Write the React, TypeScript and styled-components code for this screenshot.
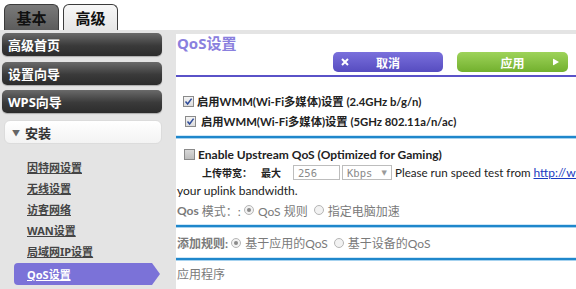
import styled, { createGlobalStyle, css } from "styled-components"

const GlobalStyle = createGlobalStyle`
  html, body {
    margin: 0;
    padding: 0;
    background: #ffffff;
  }
  body {
    width: 576px;
    height: 289px;
    overflow: hidden;
    font-family: "Noto Sans", "Noto Sans CJK SC", sans-serif;
  }
`

const Page = styled.div`
  width: 576px;
  height: 289px;
  display: flex;
  flex-direction: column;
  overflow: hidden;
`

const TabBar = styled.div`
  height: 30px;
  display: flex;
  align-items: flex-end;
  gap: 4px;
  padding-left: 4px;
  box-sizing: border-box;
`

const Tab = styled.div<{ $active?: boolean }>`
  width: 55px;
  height: 26px;
  box-sizing: border-box;
  border: 1px solid #3c3c3c;
  border-bottom: none;
  border-radius: 6px 6px 0 0;
  display: flex;
  align-items: center;
  justify-content: center;
  font-family: "Noto Sans CJK SC", sans-serif;
  font-size: 15px;
  font-weight: 700;
  color: #111;
  background: ${({ $active }) =>
    $active ? "linear-gradient(#f7f7f7, #e6e6e6)" : "linear-gradient(#7a7a7a, #5c5c5c)"};
`

const Body = styled.div`
  flex: 1;
  display: flex;
  background: #e4e4e4;
`

const Sidebar = styled.nav`
  width: 176px;
  flex: none;
  padding: 3px 0 0 2px;
  box-sizing: border-box;
  display: flex;
  flex-direction: column;
`

const MenuButton = styled.div<{ $gap: number }>`
  width: 160px;
  height: 23px;
  margin-bottom: ${({ $gap }) => $gap}px;
  border-radius: 5px;
  background: linear-gradient(#6a6a6a, #3a3a3a 55%, #2c2c2c);
  box-shadow: 0 1px 1px rgba(0, 0, 0, 0.25);
  color: #fff;
  font-family: "Noto Sans", "Noto Sans CJK SC", sans-serif;
  font-size: 13px;
  font-weight: 700;
  display: flex;
  align-items: center;
  padding-left: 6px;
  box-sizing: border-box;
`

const Section = styled.div`
  width: 158px;
  height: 24px;
  margin: 2px 0 0 2px;
  border-radius: 6px;
  border: 1px solid #dcdcdc;
  background: linear-gradient(#ffffff, #f3f3f3);
  display: flex;
  align-items: center;
  gap: 5px;
  padding-left: 7px;
  box-sizing: border-box;
  font-size: 13px;
  font-weight: 700;
  color: #333;
`

const Caret = styled.span`
  font-size: 8px;
  color: #666;
`

const SubList = styled.div`
  display: flex;
  flex-direction: column;
  padding-top: 12px;
`

const SubItem = styled.a<{ $active?: boolean }>`
  height: 21px;
  display: flex;
  align-items: center;
  padding-left: 25px;
  font-size: 11px;
  font-weight: 700;
  color: #444;
  text-decoration: underline;
  ${({ $active }) =>
    $active &&
    css`
      margin: 2px 0 0 12px;
      width: 146px;
      height: 22px;
      padding-left: 13px;
      box-sizing: border-box;
      color: #fff;
      background: #7b72d8;
      border-radius: 4px 0 0 4px;
      clip-path: polygon(0 0, 138px 0, 146px 50%, 138px 100%, 0 100%);
    `}
`

const Content = styled.main`
  flex: 1;
  min-width: 0;
  margin-top: 4px;
  background: #fff;
  overflow: hidden;
  white-space: nowrap;
  font-family: "Lato", "Noto Sans CJK SC", sans-serif;
  font-size: 12px;
  color: #222;
`

const Title = styled.h1`
  margin: 0;
  padding-left: 1px;
  height: 18px;
  line-height: 18px;
  font-family: "Noto Sans", "Noto Sans CJK SC", sans-serif;
  font-size: 15px;
  font-weight: 700;
  color: #8a80de;
`

const ButtonRow = styled.div`
  display: flex;
  justify-content: flex-end;
  gap: 14px;
  padding-right: 8px;
`

const ActionButton = styled.button<{ $tone: "cancel" | "apply" }>`
  position: relative;
  height: 20px;
  border: none;
  border-radius: 5px;
  color: #fff;
  font-family: "Noto Sans CJK SC", sans-serif;
  font-size: 12px;
  font-weight: 700;
  display: flex;
  align-items: center;
  justify-content: center;
  padding: 0;
  width: ${({ $tone }) => ($tone === "cancel" ? "110px" : "111px")};
  background: ${({ $tone }) =>
    $tone === "cancel"
      ? "linear-gradient(#7a70dc, #564cc0)"
      : "linear-gradient(#9ed35a, #72b02e)"};
`

const ButtonIcon = styled.span<{ $side: "left" | "right" }>`
  position: absolute;
  top: 50%;
  transform: translateY(-50%);
  display: flex;
  ${({ $side }) => ($side === "left" ? "left: 8px;" : "right: 9px;")}
`

const PurpleRule = styled.div`
  height: 2px;
  margin-top: 3px;
  background: #5a52c8;
`

const BlueRule = styled.div`
  height: 2px;
  background: #1f87cb;
  box-shadow: 0 1px 0 #a6d2ef, 0 -1px 0 #cfe7f7;
`

const Block = styled.div<{ $pad: number }>`
  padding-top: ${({ $pad }) => $pad}px;
`

const Row = styled.div<{ $h?: number; $indent?: number; $muted?: boolean }>`
  height: ${({ $h }) => $h ?? 20}px;
  display: flex;
  align-items: center;
  padding-left: ${({ $indent }) => $indent ?? 1}px;
  color: ${({ $muted }) => ($muted ? "#7a7a7a" : "#222")};
`

const Bold = styled.span<{ $ml?: number; $size?: number }>`
  font-weight: 700;
  margin-left: ${({ $ml }) => $ml ?? 0}px;
  font-size: ${({ $size }) => ($size ? `${$size}px` : "inherit")};
`

const Plain = styled.span`
  font-size: 11.6px;
`

const Spacer = styled.span<{ $w: number }>`
  width: ${({ $w }) => $w}px;
  flex: none;
`

const Check = styled.span<{ $checked?: boolean }>`
  width: 11px;
  height: 11px;
  box-sizing: border-box;
  border: 1px solid #8a8a8a;
  background: ${({ $checked }) =>
    $checked ? "linear-gradient(#f4f4f4, #dcdcdc)" : "linear-gradient(#d8d8d8, #bdbdbd)"};
  display: inline-flex;
  align-items: center;
  justify-content: center;
  flex: none;
`

const Radio = styled.span<{ $on?: boolean }>`
  width: 10px;
  height: 10px;
  flex: none;
  border-radius: 50%;
  box-sizing: border-box;
  border: 1px solid #b5b5b5;
  background: #f2f2f2;
  display: inline-flex;
  align-items: center;
  justify-content: center;
  margin: 0 4px 0 ${({ $on }) => ($on ? 0 : 6)}px;
  &::after {
    content: "";
    width: 4px;
    height: 4px;
    border-radius: 50%;
    background: ${({ $on }) => ($on ? "#8a8a8a" : "transparent")};
  }
`

const Field = styled.span<{ $w: number }>`
  width: ${({ $w }) => $w}px;
  flex: none;
  height: 15px;
  box-sizing: border-box;
  border: 1px solid #bdbdbd;
  display: inline-flex;
  align-items: center;
  justify-content: space-between;
  padding: 0 4px;
  font-family: "DejaVu Sans Mono", monospace;
  font-size: 10.5px;
  color: #8a8a8a;
`

const Arrow = styled.span`
  font-size: 7px;
  color: #9a9a9a;
  font-family: "DejaVu Sans", sans-serif;
`

const Link = styled.a`
  color: #1a3ac0;
  text-decoration: underline;
`

function Tick() {
  return (
    <svg width="9" height="9" viewBox="0 0 9 9">
      <path d="M1.5 4.6 L3.6 7 L7.6 1.6" fill="none" stroke="#2f4c9a" strokeWidth="1.5" />
    </svg>
  )
}

const navTop = [
  { label: "高级首页", gap: 6 },
  { label: "设置向导", gap: 5 },
  { label: "WPS向导", gap: 5 },
]

const subItems = ["因特网设置", "无线设置", "访客网络", "WAN设置", "局域网IP设置"]

export default function App() {
  return (
    <Page>
      <GlobalStyle />
      <TabBar>
        <Tab>基本</Tab>
        <Tab $active>高级</Tab>
      </TabBar>
      <Body>
        <Sidebar>
          {navTop.map((item) => (
            <MenuButton key={item.label} $gap={item.gap}>
              {item.label}
            </MenuButton>
          ))}
          <Section>
            <Caret>▼</Caret>安装
          </Section>
          <SubList>
            {subItems.map((s) => (
              <SubItem key={s}>{s}</SubItem>
            ))}
            <SubItem $active>QoS设置</SubItem>
          </SubList>
        </Sidebar>

        <Content>
          <Title>QoS设置</Title>
          <ButtonRow>
            <ActionButton $tone="cancel">
              <ButtonIcon $side="left">
                <svg width="8" height="8" viewBox="0 0 8 8">
                  <path d="M1 1 L7 7 M7 1 L1 7" stroke="#fff" strokeWidth="2" />
                </svg>
              </ButtonIcon>
              取消
            </ActionButton>
            <ActionButton $tone="apply">
              应用
              <ButtonIcon $side="right">
                <svg width="6" height="7" viewBox="0 0 6 7">
                  <path d="M0 0 L6 3.5 L0 7 Z" fill="#fff" />
                </svg>
              </ButtonIcon>
            </ActionButton>
          </ButtonRow>
          <PurpleRule />

          <Block $pad={14}>
            <Row $indent={7}>
              <Check $checked>
                <Tick />
              </Check>
              <Bold $ml={3} $size={11.3}>启用WMM(Wi-Fi多媒体)设置 (2.4GHz b/g/n)</Bold>
            </Row>
            <Row $indent={9}>
              <Check $checked>
                <Tick />
              </Check>
              <Bold $ml={5} $size={11.3}>启用WMM(Wi-Fi多媒体)设置 (5GHz 802.11a/n/ac)</Bold>
            </Row>
          </Block>
          <Block $pad={5}>
            <BlueRule />
          </Block>

          <Block $pad={7}>
            <Row $h={18} $indent={8}>
              <Check />
              <Bold $ml={3} $size={12}>Enable Upstream QoS (Optimized for Gaming)</Bold>
            </Row>
            <Row $h={19} $indent={26}>
              <Bold $size={10}>上传带宽：</Bold>
              <Bold $ml={9} $size={10}>最大</Bold>
              <Spacer $w={12} />
              <Field $w={47}>256</Field>
              <Spacer $w={2} />
              <Field $w={50}>
                Kbps<Arrow>▼</Arrow>
              </Field>
              <Plain>&nbsp;Please run speed test from&nbsp;</Plain>
              <Link>http://www.speedtest.net</Link>
            </Row>
            <Row $h={17}>your uplink bandwidth.</Row>
            <Row $h={22} $muted>
              <Bold>Qos</Bold>&nbsp;模式：:&nbsp;
              <Radio $on />
              QoS 规则
              <Radio />
              指定电脑加速
            </Row>
          </Block>
          <Block $pad={4}>
            <BlueRule />
          </Block>

          <Block $pad={6}>
            <Row $h={19} $muted>
              <Bold>添加规则:</Bold>&nbsp;
              <Radio $on />
              基于应用的QoS
              <Radio />
              基于设备的QoS
            </Row>
          </Block>
          <Block $pad={6}>
            <BlueRule />
          </Block>
          <Block $pad={5}>
            <Row $h={16} $muted>
              应用程序
            </Row>
          </Block>
        </Content>
      </Body>
    </Page>
  )
}
